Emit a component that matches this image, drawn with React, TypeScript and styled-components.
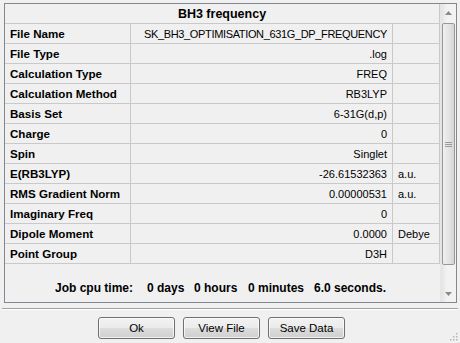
import React, { FC } from 'react';
import styled, { createGlobalStyle } from 'styled-components';

const GlobalStyle = createGlobalStyle`
  html, body {
    margin: 0;
    padding: 0;
    background: #f0f0f0;
  }
  body {
    font-family: 'Liberation Sans', Arial, sans-serif;
    font-size: 11px;
    color: #000;
  }
`;

const Window = styled.div`
  width: 460px;
  height: 343px;
  box-sizing: border-box;
  display: flex;
  flex-direction: column;
  background: #f0f0f0;
  position: relative;
  overflow: hidden;
`;

const Panel = styled.div`
  margin: 3px 3px 0 4px;
  height: 300px;
  box-sizing: border-box;
  border: 1px solid #828790;
  display: flex;
  background: #f0f0f0;
`;

const Content = styled.div`
  flex: 1;
  display: flex;
  flex-direction: column;
`;

const Title = styled.div`
  height: 19px;
  display: flex;
  align-items: center;
  justify-content: center;
  font-weight: bold;
  font-size: 12.5px;
  border-bottom: 1px solid #c9c9c9;
  border-right: 1px solid #c9c9c9;
`;

const Grid = styled.div`
  display: grid;
  grid-template-columns: 126px 262px 47px;
  grid-auto-rows: 20px;
`;

const Cell = styled.div<{ $align?: 'left' | 'right'; $bold?: boolean; $tight?: boolean }>`
  box-sizing: border-box;
  display: flex;
  align-items: center;
  justify-content: ${({ $align }) => ($align === 'right' ? 'flex-end' : 'flex-start')};
  padding: ${({ $align }) => ($align === 'right' ? '0 5px 0 0' : '0 0 0 5px')};
  font-weight: ${({ $bold }) => ($bold ? 'bold' : 'normal')};
  font-size: ${({ $bold }) => ($bold ? '11.6px' : '11px')};
  letter-spacing: ${({ $tight }) => ($tight ? '-0.35px' : 'normal')};
  border-right: 1px solid #c9c9c9;
  border-bottom: 1px solid #c9c9c9;
  white-space: nowrap;
  overflow: hidden;
`;

const CpuLine = styled.div`
  margin-top: auto;
  margin-bottom: 4px;
  height: 20px;
  display: flex;
  align-items: center;
  font-weight: bold;
  font-size: 12px;
  padding-left: 50px;
`;

const CpuPart = styled.span<{ $width: number }>`
  width: ${({ $width }) => $width}px;
  white-space: nowrap;
`;

const Scrollbar = styled.div`
  width: 16px;
  display: flex;
  flex-direction: column;
  background: linear-gradient(to right, #e3e3e3, #f2f2f2 40%, #f2f2f2);
  border-left: 1px solid #e6e6e6;
`;

const ArrowButton = styled.div`
  height: 17px;
  display: flex;
  align-items: center;
  justify-content: center;
`;

const Track = styled.div`
  flex: 1;
  display: flex;
  flex-direction: column;
  padding: 2px 1px 0 1px;
`;

const Thumb = styled.div`
  height: 242px;
  box-sizing: border-box;
  border: 1px solid #979797;
  border-radius: 2px;
  background: linear-gradient(to right, #f0f0f0, #e4e4e4 50%, #d6d6d6);
  display: flex;
  align-items: center;
  justify-content: center;
`;

const Separator = styled.div`
  margin: 5px 2px 0 2px;
  height: 0;
  border-top: 1px solid #a0a0a0;
  border-bottom: 1px solid #ffffff;
`;

const ButtonRow = styled.div`
  display: flex;
  justify-content: flex-start;
  gap: 8px;
  padding: 7px 0 0 98px;
`;

const Button = styled.button`
  width: 77px;
  height: 22px;
  box-sizing: border-box;
  border: 1px solid #707070;
  border-radius: 3px;
  background: linear-gradient(to bottom, #f2f2f2 0%, #ebebeb 50%, #dddddd 51%, #cfcfcf 100%);
  font-family: 'Liberation Sans', Arial, sans-serif;
  font-size: 11.5px;
  color: #000;
  padding: 0;
  box-shadow: inset 0 0 0 1px rgba(255, 255, 255, 0.7);
`;

const Grip = styled.svg`
  position: absolute;
  right: 2px;
  bottom: 2px;
`;

interface Row {
  label: string;
  value: string;
  unit?: string;
}

const rows: Row[] = [
  { label: 'File Name', value: 'SK_BH3_OPTIMISATION_631G_DP_FREQUENCY' },
  { label: 'File Type', value: '.log' },
  { label: 'Calculation Type', value: 'FREQ' },
  { label: 'Calculation Method', value: 'RB3LYP' },
  { label: 'Basis Set', value: '6-31G(d,p)' },
  { label: 'Charge', value: '0' },
  { label: 'Spin', value: 'Singlet' },
  { label: 'E(RB3LYP)', value: '-26.61532363', unit: 'a.u.' },
  { label: 'RMS Gradient Norm', value: '0.00000531', unit: 'a.u.' },
  { label: 'Imaginary Freq', value: '0' },
  { label: 'Dipole Moment', value: '0.0000', unit: 'Debye' },
  { label: 'Point Group', value: 'D3H' },
];

const App: FC = () => {
  return (
    <>
      <GlobalStyle />
      <Window>
        <Panel>
          <Content>
            <Title>BH3 frequency</Title>
            <Grid>
              {rows.map((row) => (
                <React.Fragment key={row.label}>
                  <Cell $bold>{row.label}</Cell>
                  <Cell $align="right" $tight={row.value.length > 20}>
                    {row.value}
                  </Cell>
                  <Cell>{row.unit ?? ''}</Cell>
                </React.Fragment>
              ))}
            </Grid>
            <CpuLine>
              <CpuPart $width={92}>Job cpu time:</CpuPart>
              <CpuPart $width={47}>0 days</CpuPart>
              <CpuPart $width={54}>0 hours</CpuPart>
              <CpuPart $width={66}>0 minutes</CpuPart>
              <CpuPart $width={90}>6.0 seconds.</CpuPart>
            </CpuLine>
          </Content>
          <Scrollbar>
            <ArrowButton>
              <svg width="7" height="4" viewBox="0 0 7 4">
                <path d="M0 4 L3.5 0 L7 4 Z" fill="#8a8a8a" />
              </svg>
            </ArrowButton>
            <Track>
              <Thumb>
                <svg width="7" height="7" viewBox="0 0 7 7">
                  <path d="M0 1.5 H7 M0 3.5 H7 M0 5.5 H7" stroke="#9a9a9a" strokeWidth="1" />
                </svg>
              </Thumb>
            </Track>
            <ArrowButton>
              <svg width="7" height="4" viewBox="0 0 7 4">
                <path d="M0 0 L3.5 4 L7 0 Z" fill="#8a8a8a" />
              </svg>
            </ArrowButton>
          </Scrollbar>
        </Panel>
        <Separator />
        <ButtonRow>
          <Button>Ok</Button>
          <Button>View File</Button>
          <Button>Save Data</Button>
        </ButtonRow>
        <Grip width="10" height="10" viewBox="0 0 10 10">
          {[
            [8, 2],
            [8, 5],
            [5, 5],
            [8, 8],
            [5, 8],
            [2, 8],
          ].map(([x, y]) => (
            <rect key={`${x}-${y}`} x={x} y={y} width="1.5" height="1.5" fill="#b5b5b5" />
          ))}
        </Grip>
      </Window>
    </>
  );
};

export default App;
